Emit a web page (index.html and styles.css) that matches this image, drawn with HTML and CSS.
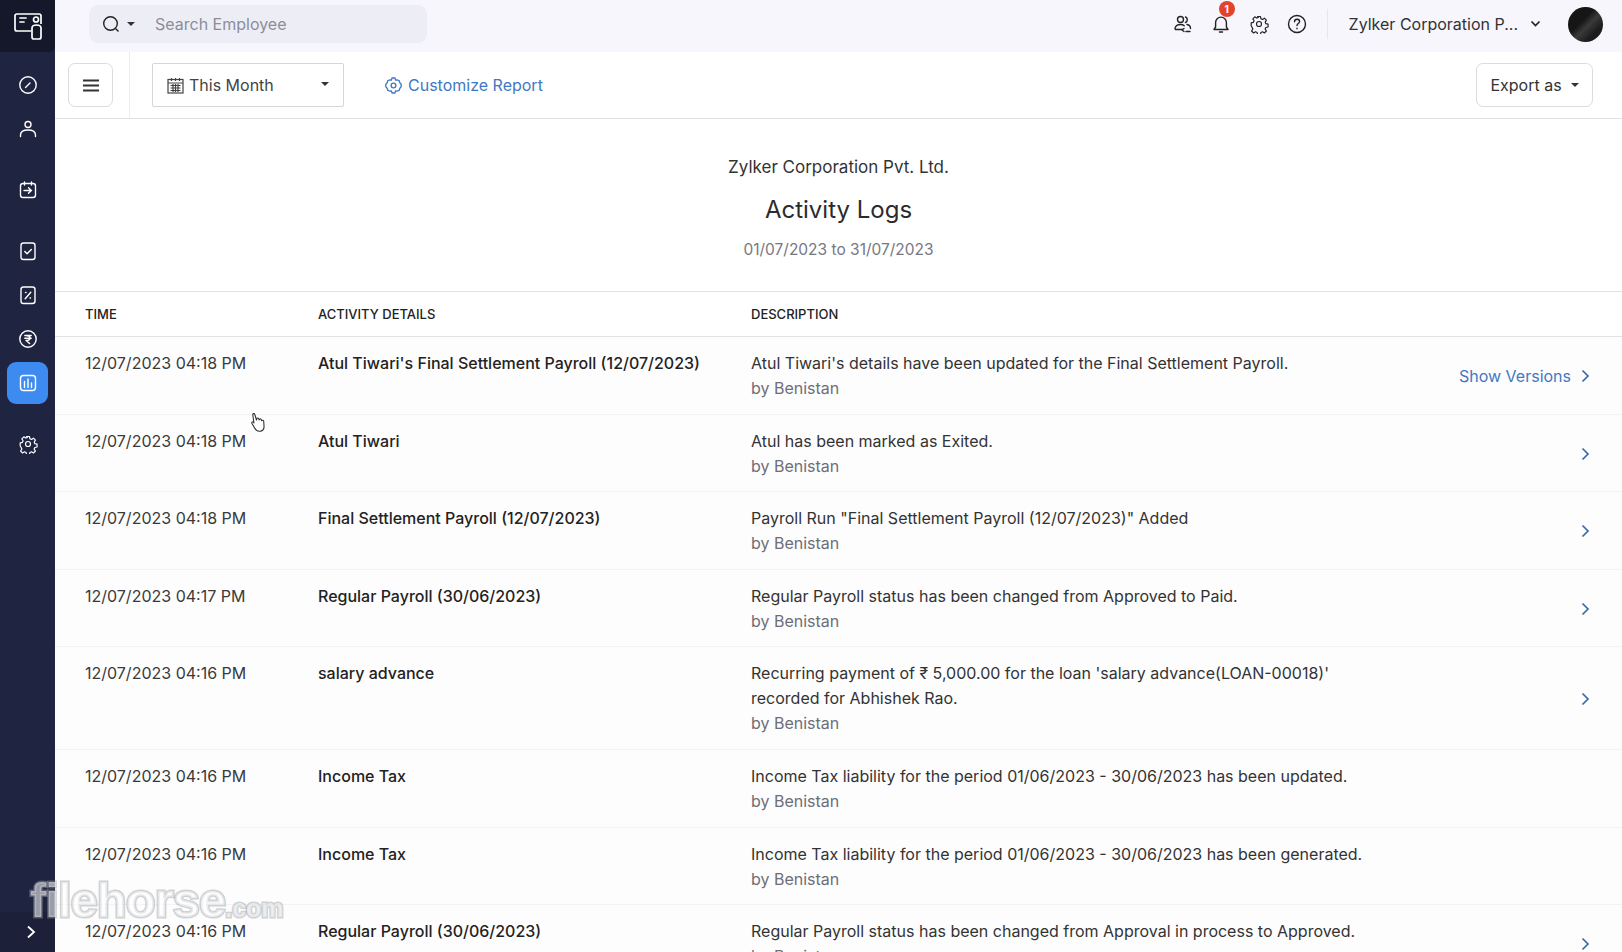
FILE: index.html
```html
<!DOCTYPE html>
<html lang="en">
<head>
    <meta charset="UTF-8">
    <title>Activity Logs</title>
    <link rel="stylesheet" href="styles.css">
</head>
<body>
    <aside class="sidebar">
        <div class="logo">
            <svg width="30" height="30" viewBox="0 0 30 30" fill="none" stroke="#fff" stroke-width="1.7" stroke-linejoin="round">
                <path d="M18 20H4a2 2 0 0 1-2-2V5a2 2 0 0 1 2-2h22a2 2 0 0 1 2 2v8"/>
                <path d="M19 17c0-2 2-3 4.500-3s4.500 1 4.500 3v9a2 2 0 0 1-2 2h-5a2 2 0 0 1-2-2z"/>
                <circle cx="23" cy="8.500" r="2.500"/>
                <path d="M7 7h6M7 11h4" stroke-linecap="round"/>
            </svg>
        </div>
        <nav class="nav">
            <div class="nav-item">
                <svg class="nav-icon" viewBox="0 0 20 20"><circle cx="10" cy="10" r="8.200"/><path d="M7.500 12.500 12 8"/></svg>
            </div>
            <div class="nav-item">
                <svg class="nav-icon" viewBox="0 0 20 20"><circle cx="10" cy="5.500" r="3"/><path d="M2.500 17.500v-1.500c0-3 3-5 7.500-5s7.500 2 7.500 5v1.500"/></svg>
            </div>
            <div class="nav-item nav-gap">
                <svg class="nav-icon" viewBox="0 0 20 20"><rect x="2.500" y="3.500" width="15" height="14" rx="2.500"/><path d="M6.500 2v3M13.500 2v3M6 10.500h7.500M10.500 7.800l2.800 2.700-2.800 2.700"/></svg>
            </div>
            <div class="nav-item nav-gap">
                <svg class="nav-icon" viewBox="0 0 20 20"><rect x="3" y="2" width="14" height="16.500" rx="2.500"/><path d="m6.800 10.500 2.300 2.200 4.200-4.200"/></svg>
            </div>
            <div class="nav-item">
                <svg class="nav-icon" viewBox="0 0 20 20"><rect x="3" y="2" width="14" height="16.500" rx="2.500"/><path d="m12.800 7.200-5.600 6.600M7.500 7.500h.5M12 13h.5"/></svg>
            </div>
            <div class="nav-item">
                <svg class="nav-icon" viewBox="0 0 20 20"><circle cx="10" cy="10" r="8.200"/><path d="M6.800 6.500h6.400M6.800 9.200h6.400M8 6.500c3.200 0 4 1 4 2.500s-1.500 2.500-4 2.500l3.600 3"/></svg>
            </div>
            <div class="nav-item">
                <div class="nav-active">
                    <svg class="nav-icon" viewBox="0 0 20 20"><rect x="2.500" y="2.500" width="15" height="15" rx="3"/><path d="M6.500 8.500v6M10 6v8.500M13.500 10v4.500"/></svg>
                </div>
            </div>
            <div class="nav-item nav-gap">
                <svg class="nav-icon" viewBox="0 0 24 24"><circle cx="12" cy="12" r="3"/><path d="M10.300 3h3.400l.6 2.700 1.900.8 2.300-1.500 2.400 2.400-1.500 2.300.8 1.900 2.700.6v3.400l-2.700.6-.8 1.900 1.500 2.300-2.400 2.400-2.300-1.500-1.900.8-.6 2.700h-3.400l-.6-2.700-1.900-.8-2.300 1.500-2.400-2.400 1.500-2.300-.8-1.900L2.600 14v-3.400l2.700-.6.8-1.900L4.600 5.800 7 3.400l2.300 1.500 1.900-.8z"/></svg>
            </div>
        </nav>
        <div class="collapse">
            <svg width="12" height="14" viewBox="0 0 12 14" fill="none" stroke="#fff" stroke-width="1.800"><path d="m3 1.500 6 5.500-6 5.500"/></svg>
        </div>
    </aside>

    <main class="main">
        <header class="topbar">
            <div class="search">
                <div class="search-type">
                    <svg width="19" height="19" viewBox="0 0 19 19" fill="none" stroke="#222" stroke-width="1.400"><circle cx="8.500" cy="8.500" r="6.800"/><path d="m13.500 13.500 3 3"/></svg>
                    <span class="caret"></span>
                </div>
                <span class="search-text">Search Employee</span>
            </div>
            <div class="top-icons">
                <svg class="top-icon" viewBox="0 0 20 20"><circle cx="7.500" cy="5.500" r="3"/><path d="M2 15c0-3 2.500-4.500 5.500-4.500 1.500 0 2.800.4 3.700 1.200M12.500 3a3 3 0 0 1 0 5.500M14 10.500c2 .4 3.500 1.800 3.500 4M2.500 15.500h7M11 14.500l-2 1.500 2 1.500M13 17.500h4"/></svg>
                <div class="bell">
                    <svg class="top-icon" viewBox="0 0 20 20"><path d="M3 15.500h14l-1.600-2.500V8.500a5.400 5.400 0 0 0-10.800 0V13zM8.500 18h3"/></svg>
                    <span class="badge">1</span>
                </div>
                <svg class="top-icon" viewBox="0 0 24 24"><circle cx="12" cy="12" r="3"/><path d="M10.300 3h3.400l.6 2.700 1.900.8 2.300-1.500 2.400 2.400-1.500 2.300.8 1.900 2.700.6v3.400l-2.700.6-.8 1.900 1.500 2.300-2.400 2.400-2.300-1.500-1.900.8-.6 2.700h-3.400l-.6-2.700-1.900-.8-2.300 1.500-2.400-2.400 1.500-2.300-.8-1.900L2.600 14v-3.400l2.700-.6.8-1.900L4.600 5.800 7 3.400l2.300 1.500 1.900-.8z"/></svg>
                <svg class="top-icon" viewBox="0 0 20 20"><circle cx="10" cy="10" r="8.500"/><path d="M7.500 7.800c0-1.500 1.100-2.500 2.600-2.500s2.500 1 2.500 2.200c0 2-2.600 2-2.600 4M10 14.200v.6"/></svg>
            </div>
            <div class="org">
                <span>Zylker Corporation P...</span>
                <svg width="11" height="8" viewBox="0 0 11 8" fill="none" stroke="#222" stroke-width="1.700"><path d="m1.500 1.500 4 4 4-4"/></svg>
            </div>
            <div class="avatar"></div>
        </header>

        <div class="toolbar">
            <div class="toolbar-left">
                <button class="menu-btn">
                    <svg width="18" height="13" viewBox="0 0 18 13" fill="none" stroke="#333" stroke-width="1.800"><path d="M1 1.500h16M1 6.500h16M1 11.500h16"/></svg>
                </button>
            </div>
            <div class="period">
                <svg width="17" height="17" viewBox="0 0 17 17" fill="none" stroke="#444" stroke-width="1.200"><rect x="1" y="2.500" width="15" height="13.500"/><path d="M1 6h15M4.500 1v3M8.500 1v3M12.500 1v3M3.500 8.500h10M3.500 11h10M3.500 13.500h10M6 7v8M8.500 7v8M11 7v8"/></svg>
                <span>This Month</span>
                <span class="caret period-caret"></span>
            </div>
            <a class="customize">
                <svg width="19" height="19" viewBox="0 0 24 24" fill="none" stroke="#3f78c4" stroke-width="1.700"><circle cx="12" cy="12" r="3"/><path d="M10.300 2.500h3.400l1 2.600 2-.2 2.500 1 .8 2.500 1.700 2-.0 3.200-1.700 2-.8 2.500-2.500 1-2-.2-1 2.600h-3.400l-1-2.600-2 .2-2.500-1-.8-2.500-1.700-2v-3.200l1.700-2 .8-2.500 2.500-1 2 .2z"/></svg>
                <span>Customize Report</span>
            </a>
            <button class="export-btn">Export as <span class="caret"></span></button>
        </div>

        <section class="report-head">
            <div class="org-name">Zylker Corporation Pvt. Ltd.</div>
            <h1 class="report-title">Activity Logs</h1>
            <div class="report-date">01/07/2023 to 31/07/2023</div>
        </section>

        <div class="table-head">
            <div>TIME</div>
            <div>ACTIVITY DETAILS</div>
            <div>DESCRIPTION</div>
        </div>

        <div class="row">
            <div class="cell-time">12/07/2023 04:18 PM</div>
            <div class="cell-name">Atul Tiwari's Final Settlement Payroll (12/07/2023)</div>
            <div>Atul Tiwari's details have been updated for the Final Settlement Payroll.<div class="by">by Benistan</div></div>
            <div class="cell-action"><a class="versions">Show Versions</a><svg class="chev" viewBox="0 0 9 14"><path d="m1.500 1.500 5.500 5.500-5.500 5.500"/></svg></div>
        </div>
        <div class="row">
            <div class="cell-time">12/07/2023 04:18 PM</div>
            <div class="cell-name">Atul Tiwari</div>
            <div>Atul has been marked as Exited.<div class="by">by Benistan</div></div>
            <div class="cell-action"><svg class="chev" viewBox="0 0 9 14"><path d="m1.500 1.500 5.500 5.500-5.500 5.500"/></svg></div>
        </div>
        <div class="row">
            <div class="cell-time">12/07/2023 04:18 PM</div>
            <div class="cell-name">Final Settlement Payroll (12/07/2023)</div>
            <div>Payroll Run "Final Settlement Payroll (12/07/2023)" Added<div class="by">by Benistan</div></div>
            <div class="cell-action"><svg class="chev" viewBox="0 0 9 14"><path d="m1.500 1.500 5.500 5.500-5.500 5.500"/></svg></div>
        </div>
        <div class="row">
            <div class="cell-time">12/07/2023 04:17 PM</div>
            <div class="cell-name">Regular Payroll (30/06/2023)</div>
            <div>Regular Payroll status has been changed from Approved to Paid.<div class="by">by Benistan</div></div>
            <div class="cell-action"><svg class="chev" viewBox="0 0 9 14"><path d="m1.500 1.500 5.500 5.500-5.500 5.500"/></svg></div>
        </div>
        <div class="row">
            <div class="cell-time">12/07/2023 04:16 PM</div>
            <div class="cell-name">salary advance</div>
            <div>Recurring payment of ₹ 5,000.00 for the loan 'salary advance(LOAN-00018)' recorded for Abhishek Rao.<div class="by">by Benistan</div></div>
            <div class="cell-action"><svg class="chev" viewBox="0 0 9 14"><path d="m1.500 1.500 5.500 5.500-5.500 5.500"/></svg></div>
        </div>
        <div class="row">
            <div class="cell-time">12/07/2023 04:16 PM</div>
            <div class="cell-name">Income Tax</div>
            <div>Income Tax liability for the period 01/06/2023 - 30/06/2023 has been updated.<div class="by">by Benistan</div></div>
            <div class="cell-action"></div>
        </div>
        <div class="row">
            <div class="cell-time">12/07/2023 04:16 PM</div>
            <div class="cell-name">Income Tax</div>
            <div>Income Tax liability for the period 01/06/2023 - 30/06/2023 has been generated.<div class="by">by Benistan</div></div>
            <div class="cell-action"></div>
        </div>
        <div class="row">
            <div class="cell-time">12/07/2023 04:16 PM</div>
            <div class="cell-name">Regular Payroll (30/06/2023)</div>
            <div>Regular Payroll status has been changed from Approval in process to Approved.<div class="by">by Benistan</div></div>
            <div class="cell-action"><svg class="chev" viewBox="0 0 9 14"><path d="m1.500 1.500 5.500 5.500-5.500 5.500"/></svg></div>
        </div>
    </main>

    <svg class="hand" width="18" height="21" viewBox="0 0 18 21" fill="#fff" stroke="#333" stroke-width="1.100" stroke-linejoin="round">
        <path d="M5 11 3.800 3c-.3-1.500 1.600-2 2-.5L7.500 8l.3-1.300c.3-1 1.800-.9 2 .2l.2 1 .5-.6c.5-.7 1.800-.4 1.900.6l.1.800.6-.4c.7-.3 1.600.2 1.600 1l.3 4.500c.2 2.300-1 4.800-3.400 5.300-2.800.5-4.900-.8-6-3L3 11.500c-.8-1.500 1-2.600 2-.5z"/>
    </svg>

    <div class="watermark">filehorse<span class="watermark-tld">.com</span></div>
</body>
</html>
```

FILE: styles.css
```css
* {
    box-sizing: border-box;
}
html, body {
    height: 100%;
}
body {
    margin: 0;
    display: flex;
    height: 952px;
    overflow: hidden;
    background-color: #fff;
    font-family: Inter, "Noto Sans", sans-serif;
    font-size: 16px;
    color: #2b2b2b;
}

/* sidebar */
.sidebar {
    width: 55px;
    flex: none;
    display: flex;
    flex-direction: column;
    background-color: #1f2440;
}
.logo {
    height: 52px;
    display: flex;
    align-items: center;
    justify-content: center;
    background-color: #14182a;
    border-bottom-right-radius: 6px;
}
.nav {
    flex: 1;
    padding-top: 11px;
}
.nav-item {
    height: 44px;
    display: flex;
    align-items: center;
    justify-content: center;
}
.nav-gap {
    margin-top: 17px;
}
.nav-icon {
    width: 20px;
    height: 20px;
    fill: none;
    stroke: #fff;
    stroke-width: 1.4;
    stroke-linecap: round;
    stroke-linejoin: round;
}
.nav-active {
    width: 41px;
    height: 42px;
    display: flex;
    align-items: center;
    justify-content: center;
    background-color: #3d8bf0;
    border-radius: 9px;
}
.collapse {
    height: 40px;
    display: flex;
    align-items: center;
    justify-content: center;
    padding-left: 6px;
    background-color: #1c2038;
}

/* top bar */
.main {
    flex: 1;
    min-width: 0;
}
.topbar {
    height: 52px;
    display: flex;
    align-items: center;
    padding: 0 19px 4px 34px;
    background-color: #f6f6fc;
}
.search {
    width: 338px;
    height: 38px;
    display: flex;
    align-items: center;
    background-color: #edeef5;
    border-radius: 9px;
}
.search-type {
    display: flex;
    align-items: center;
    gap: 6px;
    padding-left: 13px;
    width: 66px;
}
.search-text {
    color: #8b8d9c;
    font-size: 16px;
}
.caret {
    display: inline-block;
    width: 0;
    height: 0;
    border-left: 4.500px solid transparent;
    border-right: 4.500px solid transparent;
    border-top: 4.500px solid #333;
}
.top-icons {
    margin-left: auto;
    display: flex;
    align-items: center;
    gap: 18px;
    height: 30px;
    padding-right: 20px;
    border-right: 1px solid #e6e6ee;
}
.top-icon {
    width: 20px;
    height: 20px;
    display: block;
    fill: none;
    stroke: #222;
    stroke-width: 1.400;
    stroke-linecap: round;
    stroke-linejoin: round;
}
.bell {
    position: relative;
}
.badge {
    position: absolute;
    top: -13px;
    left: 8px;
    width: 16px;
    height: 16px;
    border-radius: 50%;
    background-color: #e2432d;
    color: #fff;
    font-size: 10px;
    font-weight: 700;
    line-height: 16px;
    text-align: center;
}
.org {
    display: flex;
    align-items: center;
    gap: 12px;
    margin-left: 21px;
    font-size: 16px;
    color: #333;
}
.avatar {
    width: 35px;
    height: 35px;
    margin-left: 27px;
    border-radius: 50%;
    background: linear-gradient(135deg, #161616 40%, #3a3a3a 55%, #1c1c1c 75%);
}

/* toolbar */
.toolbar {
    height: 67px;
    display: flex;
    align-items: center;
    border-bottom: 1px solid #e2e2e6;
    padding-right: 29px;
}
.toolbar-left {
    width: 75px;
    height: 100%;
    padding-left: 13px;
    display: flex;
    align-items: center;
    border-right: 1px solid #ececf0;
}
.menu-btn {
    width: 45px;
    height: 44px;
    display: flex;
    align-items: center;
    justify-content: center;
    padding: 0;
    background-color: #fff;
    border: 1px solid #dcdce0;
    border-radius: 7px;
}
.period {
    width: 192px;
    height: 44px;
    margin-left: 22px;
    display: flex;
    align-items: center;
    gap: 5px;
    padding: 0 14px;
    border: 1px solid #d6d6da;
    border-radius: 2px;
    color: #444;
}
.period-caret {
    margin-left: auto;
    margin-bottom: 3px;
}
.customize {
    margin-left: 40px;
    display: flex;
    align-items: center;
    gap: 5px;
    color: #3f78c4;
}
.export-btn {
    margin-left: auto;
    width: 117px;
    height: 44px;
    display: flex;
    align-items: center;
    justify-content: center;
    gap: 9px;
    background-color: #fff;
    border: 1px solid #dcdce0;
    border-radius: 7px;
    font-family: inherit;
    font-size: 16px;
    color: #333;
}

/* report heading */
.report-head {
    height: 172px;
    padding-top: 35px;
    text-align: center;
}
.org-name {
    font-size: 17px;
    line-height: 26px;
    color: #333;
}
.report-title {
    margin: 14px 0 0;
    font-size: 24px;
    font-weight: 400;
    line-height: 32px;
    color: #2b2b2b;
}
.report-date {
    margin-top: 12px;
    font-size: 15.500px;
    line-height: 24px;
    color: #77777f;
}

/* table */
.table-head, .row {
    display: grid;
    grid-template-columns: 233px 433px 620px 1fr;
    padding-left: 30px;
}
.table-head {
    height: 46px;
    align-items: center;
    border-top: 1px solid #e2e2e6;
    border-bottom: 1px solid #e2e2e6;
    font-size: 13px;
    font-weight: 500;
    color: #222;
}
.row {
    padding-top: 14px;
    padding-bottom: 12.600px;
    border-bottom: 1px solid #f3f3f5;
    background-color: #fdfdfe;
    font-size: 16px;
    line-height: 25px;
    color: #333;
}
.cell-time {
    color: #3a3a3a;
}
.cell-name {
    font-weight: 500;
    color: #222;
}
.by {
    color: #6e6e76;
}
.cell-action {
    display: flex;
    align-items: center;
    justify-content: flex-end;
    gap: 10px;
    padding-right: 32px;
}
.versions {
    color: #3f78c4;
}
.chev {
    width: 9px;
    height: 14px;
    fill: none;
    stroke: #3a6aa8;
    stroke-width: 1.700;
}

/* overlays */
.hand {
    position: absolute;
    left: 249px;
    top: 412px;
}
.watermark {
    position: absolute;
    left: 30px;
    top: 872px;
    font-family: "Liberation Sans", sans-serif;
    font-size: 49px;
    font-weight: 700;
    line-height: 56px;
    letter-spacing: -1px;
    color: rgba(255, 255, 255, 0.55);
    -webkit-text-stroke: 3px rgba(150, 155, 160, 0.45);
    paint-order: stroke fill;
}
.watermark-tld {
    font-size: 25px;
    letter-spacing: 0;
}
```
